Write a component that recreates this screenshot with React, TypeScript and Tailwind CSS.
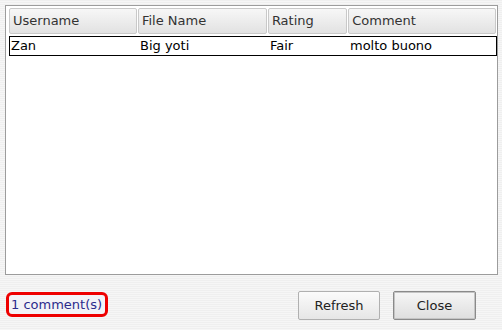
export default function App() {
  const cols = [
    { name: "Username", w: "w-[129px]" },
    { name: "File Name", w: "w-[130px]" },
    { name: "Rating", w: "w-[80px]" },
    { name: "Comment", w: "w-[149px]" },
  ];
  const row = ["Zan", "Big yoti", "Fair", "molto buono"];
  return (
    <div
      className="w-[502px] h-[330px] overflow-hidden text-[13px] text-[#222] bg-[repeating-linear-gradient(to_bottom,#efefef_0px,#efefef_1px,#f6f6f6_1px,#f6f6f6_2px)] flex flex-col"
      style={{ fontFamily: '"DejaVu Sans", sans-serif' }}
    >
      <div className="ml-[5px] mt-[5px] w-[493px] h-[270px] border border-[#9c9c9c] bg-white pt-[2px] pl-[2px] pr-[1px]">
        <div className="flex h-[26px] gap-0">
          {cols.map((c) => (
            <div
              key={c.name}
              className={`${c.w} h-[26px] ml-[1px] border border-[#c9c9c9] rounded-[2px] bg-[linear-gradient(to_bottom,#f7f7f7,#e2e2e2)] flex items-center pl-[3px] text-[#333]`}
            >
              {c.name}
            </div>
          ))}
        </div>
        <div className="flex h-[20px] mt-[2px] ml-[1px] w-[488px] border border-black items-center text-black">
          <div className="w-[130px] pl-[1px]">{row[0]}</div>
          <div className="w-[130px]">{row[1]}</div>
          <div className="w-[80px]">{row[2]}</div>
          <div className="flex-1">{row[3]}</div>
        </div>
      </div>
      <div className="flex items-start mt-[16px]">
        <div className="ml-[6px] mt-[1px] w-[102px] h-[25px] border-[3px] border-[#ee0000] rounded-[6px] flex items-center pl-[2px] text-[#2c2c8c] bg-[#f3f3f7]">
          1 comment(s)
        </div>
        <div className="flex-1" />
        <button className="w-[82px] h-[29px] border border-[#b0b0b0] rounded-[2px] bg-[linear-gradient(to_bottom,#fbfbfb,#e6e6e6)] text-[#222] flex items-center justify-center">
          Refresh
        </button>
        <button className="ml-[13px] mr-[26px] w-[83px] h-[29px] border border-[#8a8a8a] rounded-[2px] bg-[linear-gradient(to_bottom,#f6f6f6,#dedede)] text-[#222] flex items-center justify-center shadow-[inset_0_0_0_1px_#c4c4c4]">
          Close
        </button>
      </div>
    </div>
  );
}
